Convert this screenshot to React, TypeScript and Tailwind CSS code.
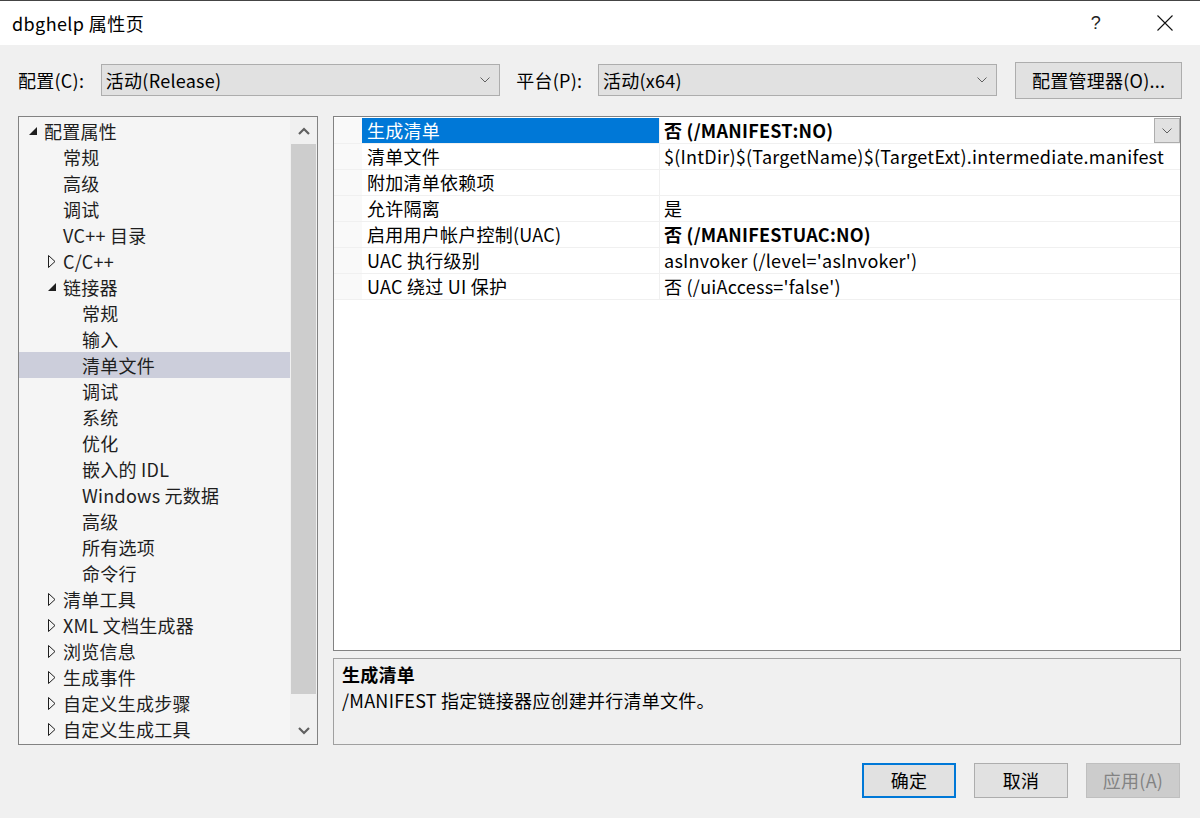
import React from "react";

type TreeItem = { label: string; level: 0 | 1 | 2; arrow?: "open" | "closed"; selected?: boolean };

const tree: TreeItem[] = [
  { label: "配置属性", level: 0, arrow: "open" },
  { label: "常规", level: 1 },
  { label: "高级", level: 1 },
  { label: "调试", level: 1 },
  { label: "VC++ 目录", level: 1 },
  { label: "C/C++", level: 1, arrow: "closed" },
  { label: "链接器", level: 1, arrow: "open" },
  { label: "常规", level: 2 },
  { label: "输入", level: 2 },
  { label: "清单文件", level: 2, selected: true },
  { label: "调试", level: 2 },
  { label: "系统", level: 2 },
  { label: "优化", level: 2 },
  { label: "嵌入的 IDL", level: 2 },
  { label: "Windows 元数据", level: 2 },
  { label: "高级", level: 2 },
  { label: "所有选项", level: 2 },
  { label: "命令行", level: 2 },
  { label: "清单工具", level: 1, arrow: "closed" },
  { label: "XML 文档生成器", level: 1, arrow: "closed" },
  { label: "浏览信息", level: 1, arrow: "closed" },
  { label: "生成事件", level: 1, arrow: "closed" },
  { label: "自定义生成步骤", level: 1, arrow: "closed" },
  { label: "自定义生成工具", level: 1, arrow: "closed" },
];

const props: { name: string; value: string; bold?: boolean }[] = [
  { name: "生成清单", value: "否 (/MANIFEST:NO)", bold: true },
  { name: "清单文件", value: "$(IntDir)$(TargetName)$(TargetExt).intermediate.manifest" },
  { name: "附加清单依赖项", value: "" },
  { name: "允许隔离", value: "是" },
  { name: "启用用户帐户控制(UAC)", value: "否 (/MANIFESTUAC:NO)", bold: true },
  { name: "UAC 执行级别", value: "asInvoker (/level='asInvoker')" },
  { name: "UAC 绕过 UI 保护", value: "否 (/uiAccess='false')" },
];

const indent: Record<number, string> = { 0: "pl-[9px]", 1: "pl-[28px]", 2: "pl-[47px]" };

function Chevron({ className = "" }: { className?: string }) {
  return (
    <svg width="10" height="6" viewBox="0 0 10 6" className={className}>
      <path d="M0.5 0.5 L5 5 L9.5 0.5" fill="none" stroke="#606060" strokeWidth="1" />
    </svg>
  );
}

function Arrow({ kind }: { kind?: "open" | "closed" }) {
  if (kind === "open")
    return (
      <svg width="9" height="9" viewBox="0 0 9 9" className="ml-[1px]">
        <polygon points="8,0 8,8 0,8" fill="#1e1e1e" />
      </svg>
    );
  if (kind === "closed")
    return (
      <svg width="8" height="13" viewBox="0 0 8 13" className="ml-[1px]">
        <polygon points="0.5,0.5 7,6.5 0.5,12.5" fill="none" stroke="#1e1e1e" strokeWidth="1" />
      </svg>
    );
  return null;
}

export default function App() {
  return (
    <div className="w-[1200px] h-[818px] bg-[#f0f0f0] flex flex-col font-['Noto_Sans_CJK_SC','Noto_Sans',sans-serif] tracking-[0.25px] text-black overflow-hidden border-t border-[#444]">
      {/* Title bar */}
      <div className="h-[44px] bg-white flex items-center pl-[12px] shrink-0">
        <div className="text-[18px] leading-none tracking-[0.4px]">dbghelp 属性页</div>
        <div className="flex-1" />
        <div className="w-[46px] flex justify-center text-[18px] font-['Liberation_Sans',sans-serif] text-[#222]">?</div>
        <div className="w-[23px]" />
        <div className="w-[46px] flex justify-center mr-[12px]">
          <svg width="16" height="16" viewBox="0 0 16 16">
            <path d="M0.5 0.5 L15.5 15.5 M15.5 0.5 L0.5 15.5" stroke="#111" strokeWidth="1.1" />
          </svg>
        </div>
      </div>

      {/* Config row */}
      <div className="mt-[17px] h-[36px] flex items-center px-[18px] shrink-0 text-[18px]">
        <div className="w-[83px]">配置(C):</div>
        <div className="w-[400px] h-[32px] bg-[#e1e1e1] border border-[#adadad] flex items-center pl-[4px] pr-[9px]">
          <span className="flex-1">活动(Release)</span>
          <Chevron />
        </div>
        <div className="w-[16px]" />
        <div className="w-[82px]">平台(P):</div>
        <div className="w-[400px] h-[32px] bg-[#e1e1e1] border border-[#adadad] flex items-center pl-[4px] pr-[9px]">
          <span className="flex-1">活动(x64)</span>
          <Chevron />
        </div>
        <div className="w-[18px]" />
        <div className="w-[167px] h-[37px] bg-[#e1e1e1] border border-[#adadad] flex items-center justify-center">
          配置管理器(O)...
        </div>
      </div>

      {/* Main */}
      <div className="mt-[18px] h-[629px] flex px-[18px] gap-[15px] shrink-0">
        {/* Tree */}
        <div className="w-[300px] h-full border border-[#828282] bg-[#f5f5f5] flex">
          <div className="flex-1 pt-[1px] text-[18px] text-[#1e1e1e]">
            {tree.map((t, i) => (
              <div
                key={i}
                className={`h-[26px] flex items-center ${indent[t.level]} ${t.selected ? "bg-[#cccedb]" : ""}`}
              >
                <div className="w-[16px] flex items-center">
                  <Arrow kind={t.arrow} />
                </div>
                <span className="leading-none whitespace-nowrap -mt-[1px]">{t.label}</span>
              </div>
            ))}
          </div>
          <div className="w-[27px] bg-[#f0f0f0] flex flex-col">
            <div className="h-[27px] flex items-center justify-center">
              <svg width="12" height="8" viewBox="0 0 12 8">
                <path d="M1 7 L6 2 L11 7" fill="none" stroke="#606060" strokeWidth="2.2" />
              </svg>
            </div>
            <div className="mx-[1px] h-[550px] bg-[#cdcdcd]" />
            <div className="flex-1" />
            <div className="h-[27px] flex items-center justify-center">
              <svg width="12" height="8" viewBox="0 0 12 8">
                <path d="M1 1 L6 6 L11 1" fill="none" stroke="#606060" strokeWidth="2.2" />
              </svg>
            </div>
          </div>
        </div>

        {/* Right side */}
        <div className="w-[848px] h-full flex flex-col gap-[7px]">
          <div className="h-[535px] border border-[#828282] bg-white pt-[1px] text-[18px]">
            {props.map((p, i) => (
              <div key={i} className="h-[26px] flex border-b border-[#f0f0f0]">
                <div className="w-[28px] bg-[#f9f9f9]" />
                <div
                  className={`w-[298px] flex items-center pl-[5px] border-r border-[#f0f0f0] ${
                    i === 0 ? "bg-[#0078d7] text-white" : ""
                  }`}
                >
                  <span className="leading-none whitespace-nowrap -mt-[1px]">{p.name}</span>
                </div>
                <div className={`flex-1 flex items-center pl-[4px] ${p.bold ? "font-bold" : ""}`}>
                  <span className="leading-none whitespace-nowrap flex-1 -mt-[1px]">{p.value}</span>
                  {i === 0 && (
                    <div className="w-[26px] h-[25px] bg-[#e1e1e1] border border-[#adadad] flex items-center justify-center">
                      <Chevron />
                    </div>
                  )}
                </div>
              </div>
            ))}
          </div>
          <div className="flex-1 border border-[#a0a0a0] bg-[#f0f0f0] px-[8px] pt-[3px] text-[18px]">
            <div className="font-bold leading-[25px]">生成清单</div>
            <div className="leading-[26px]">/MANIFEST 指定链接器应创建并行清单文件。</div>
          </div>
        </div>
      </div>

      {/* Buttons */}
      <div className="mt-[18px] h-[35px] flex justify-end pr-[20px] gap-[18px] text-[18px] shrink-0">
        <div className="w-[94px] h-[35px] bg-[#e1e1e1] border-2 border-[#0078d7] flex items-center justify-center">确定</div>
        <div className="w-[94px] h-[35px] bg-[#e1e1e1] border border-[#adadad] flex items-center justify-center">取消</div>
        <div className="w-[94px] h-[35px] bg-[#cccccc] border border-[#bfbfbf] flex items-center justify-center text-[#838383]">应用(A)</div>
      </div>
    </div>
  );
}
